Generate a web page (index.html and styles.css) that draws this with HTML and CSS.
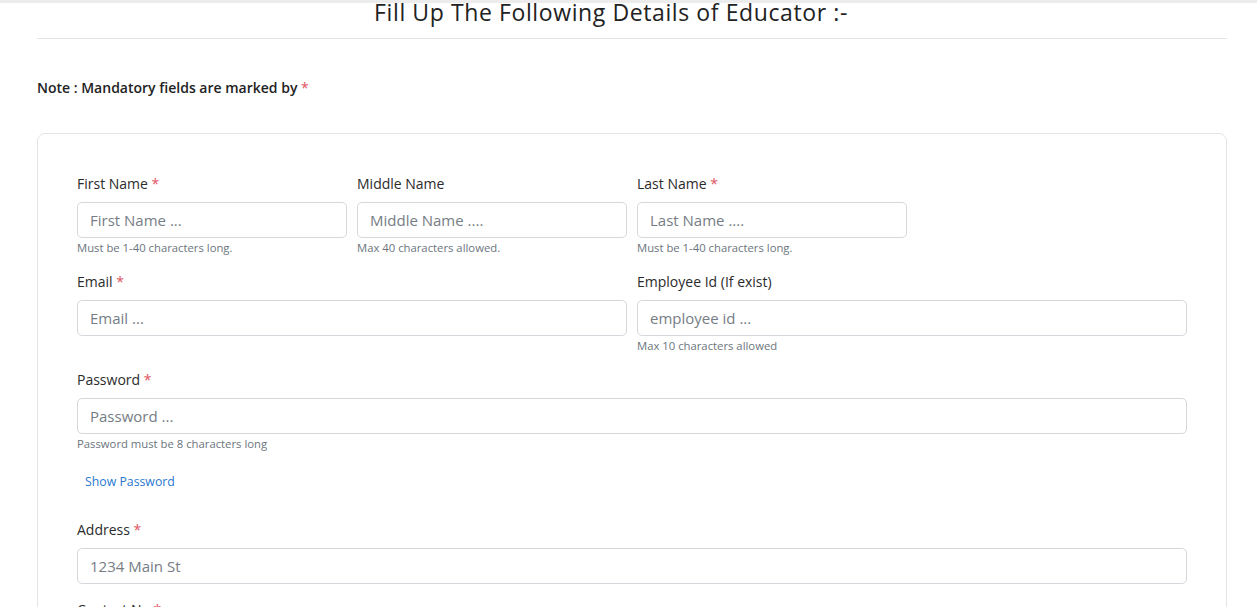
FILE: index.html
```html
<!DOCTYPE html>
<html lang="en">
<head>
<meta charset="utf-8">
<title>Educator Details</title>
<link rel="stylesheet" href="styles.css">
</head>
<body>
<div class="topbar"></div>
<main class="page">
  <h3 class="title">Fill Up The Following Details of Educator :-</h3>
  <hr class="rule">
  <p class="note">Note : Mandatory fields are marked by <span class="req">*</span></p>
  <section class="card">
    <form class="form-grid">
      <div class="field">
        <label class="label">First Name <span class="req">*</span></label>
        <input class="input" type="text" placeholder="First Name ...">
        <small class="help">Must be 1-40 characters long.</small>
      </div>
      <div class="field">
        <label class="label">Middle Name</label>
        <input class="input" type="text" placeholder="Middle Name ....">
        <small class="help">Max 40 characters allowed.</small>
      </div>
      <div class="field">
        <label class="label">Last Name <span class="req">*</span></label>
        <input class="input" type="text" placeholder="Last Name ....">
        <small class="help">Must be 1-40 characters long.</small>
      </div>
      <div class="field row-start-2">
        <label class="label">Email <span class="req">*</span></label>
        <input class="input" type="email" placeholder="Email ...">
      </div>
      <div class="field span-2">
        <label class="label">Employee Id (If exist)</label>
        <input class="input" type="text" placeholder="employee id ...">
        <small class="help">Max 10 characters allowed</small>
      </div>
      <div class="field span-4">
        <label class="label">Password <span class="req">*</span></label>
        <input class="input" type="password" placeholder="Password ...">
        <small class="help">Password must be 8 characters long</small>
      </div>
      <div class="span-4 toggle-row">
        <button type="button" class="link-btn">Show Password</button>
      </div>
      <div class="field span-4">
        <label class="label">Address <span class="req">*</span></label>
        <input class="input" type="text" placeholder="1234 Main St">
      </div>
      <div class="field span-4">
        <label class="label">Contact No <span class="req">*</span></label>
        <input class="input" type="text" placeholder="Contact No ...">
      </div>
    </form>
  </section>
</main>
</body>
</html>
```

FILE: styles.css
```css
html, body {
  margin: 0;
  padding: 0;
  background: #fff;
}

body {
  font-family: "Open Sans", "Noto Sans", sans-serif;
  color: #212529;
  overflow: hidden;
}

.topbar {
  height: 3px;
  background: #ececec;
  margin-bottom: -3px;
}

.page {
  padding: 0 30px 0 37px;
}

.title {
  margin: 0;
  padding-right: 42px;
  text-align: center;
  font-size: 23px;
  letter-spacing: 0.6px;
  font-weight: 400;
  line-height: 24px;
  color: #222;
}

.rule {
  margin: 14px 0 0;
  border: 0;
  border-top: 1px solid #e4e4e4;
}

.note {
  margin: 39px 0 0;
  font-size: 14px;
  font-weight: 600;
  line-height: 20px;
  color: #222;
}

.req {
  color: #e0535f;
  font-weight: 400;
}

.card {
  margin-top: 35px;
  border: 1px solid #e4e4e4;
  border-radius: 8px;
  padding: 40px 39px 40px;
}

.form-grid {
  display: grid;
  grid-template-columns: repeat(4, 1fr);
  column-gap: 10px;
  row-gap: 16px;
}

.field {
  display: flex;
  flex-direction: column;
}

.span-2 { grid-column: span 2; }
.span-4 { grid-column: span 4; }
.row-start-2 { grid-column: 1 / span 2; }

.label {
  font-size: 14px;
  line-height: 20px;
  color: #2b2b2b;
  margin-bottom: 8px;
}

.input {
  box-sizing: border-box;
  height: 36px;
  padding: 0 12px;
  border: 1px solid #d4d8dc;
  border-radius: 5px;
  font-family: inherit;
  font-size: 15px;
  color: #333;
  background: #fff;
  outline: none;
}

.input::placeholder {
  color: #767d84;
}

.help {
  margin-top: 2px;
  font-size: 11.3px;
  line-height: 16px;
  color: #6c757d;
}

.toggle-row {
  display: flex;
  margin-bottom: 8px;
}

.link-btn {
  border: 1px solid transparent;
  background: none;
  padding: 4px 7px;
  font-family: inherit;
  font-size: 12.3px;
  line-height: 18px;
  color: #2a78d0;
  cursor: pointer;
}
```
